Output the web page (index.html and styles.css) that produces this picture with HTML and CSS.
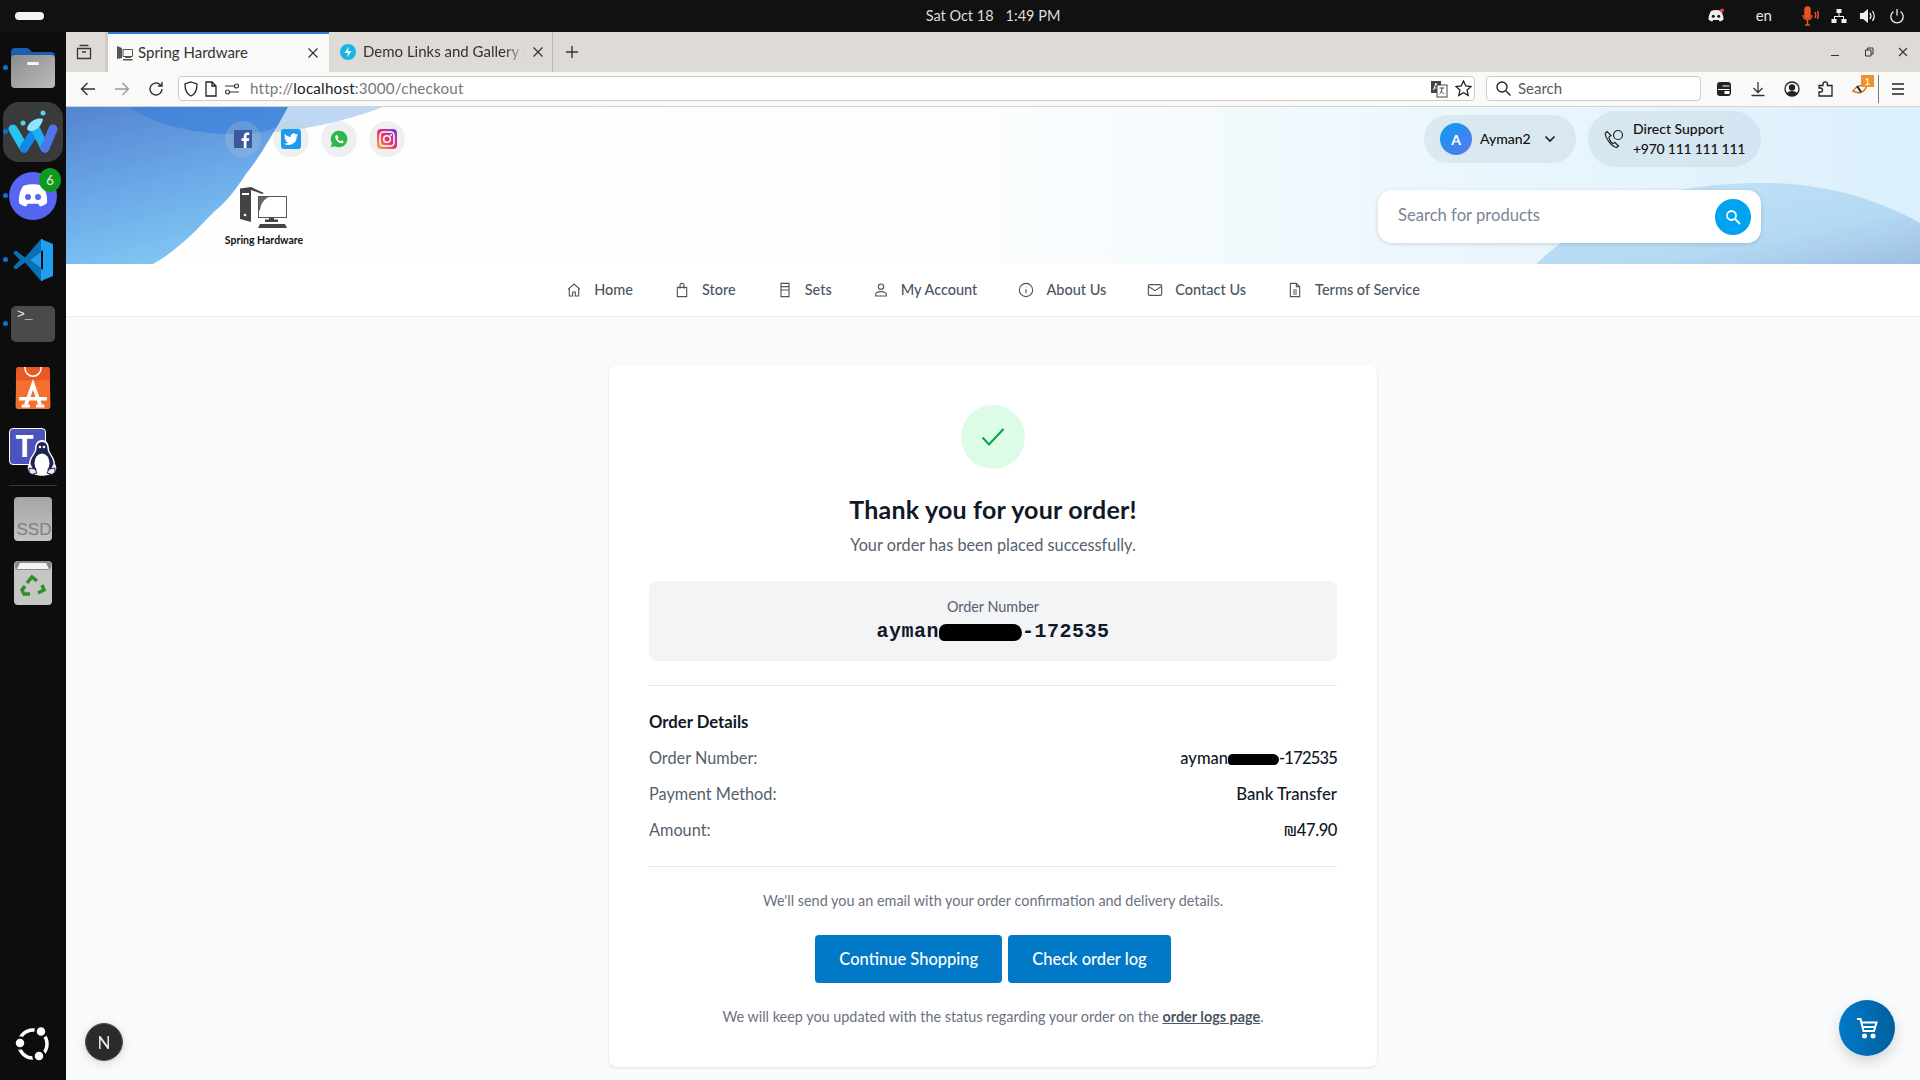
FILE: index.html
```html
<!DOCTYPE html>
<html>
<head>
	<meta charset="utf-8">
	<title>Spring Hardware</title>
	<link rel="stylesheet" href="styles.css">
</head>
<body>
	<div class="topbar">
		<div class="activities"></div>
		<div class="clock"><span>Sat Oct 18</span><span>1:49 PM</span></div>
		<div class="tray">
			<svg class="tray-discord" width="18" height="16" viewBox="0 0 18 16"><path fill="#eee" d="M4 3c3-1.300 7-1.300 10 0 1.500 2.500 2.500 5 2.500 8.500-1 1-2.500 1.700-3.800 1.900l-.9-1.500H6.200l-.9 1.500C4 13.200 2.500 12.500 1.500 11.500 1.500 8 2.500 5.500 4 3z"/><circle cx="6.300" cy="8.300" r="1.500" fill="#111"/><circle cx="11.700" cy="8.300" r="1.500" fill="#111"/><circle cx="15" cy="2.500" r="2" fill="#e5443a"/></svg>
			<span class="tray-lang">en</span>
			<svg class="tray-mic" width="18" height="20" viewBox="0 0 18 20" fill="none" stroke="#e95420" stroke-width="1.500"><rect x="4" y="1" width="5" height="11" rx="2.500" fill="#e95420"/><path d="M2 9c0 6 9 6 9 0M6.500 14v5M4 19h5M14 6c1 2 1 4 0 6M16.500 5c1 2.500 1 5.500 0 8"/></svg>
			<svg class="tray-net" width="16" height="16" viewBox="0 0 16 16" fill="#eee"><rect x="5.500" y="1" width="5" height="4"/><rect x="0.500" y="11" width="5" height="4"/><rect x="10.500" y="11" width="5" height="4"/><path d="M7.500 5h1v3h4.500v3h-1V9H4v2H3V8h4.500z"/></svg>
			<svg class="tray-vol" width="18" height="16" viewBox="0 0 18 16"><path fill="#eee" d="M1 5h3l5-4v14l-5-4H1z"/><path fill="none" stroke="#eee" stroke-width="1.300" d="M11 5c1.200 2 1.200 4 0 6M13.500 3c2 3 2 7 0 10"/></svg>
			<svg class="tray-power" width="16" height="16" viewBox="0 0 16 16" fill="none" stroke="#eee" stroke-width="1.300"><path d="M8 1v6.500M4.500 3.500a6.200 6.200 0 1 0 7 0"/></svg>
		</div>
	</div>

	<div class="desktop">
		<div class="dock">
			<div class="dock-item">
				<span class="dot"></span>
				<svg width="44" height="40" viewBox="0 0 44 40"><defs><linearGradient id="folderg" x1="0" y1="0" x2="1" y2="1"><stop offset="0" stop-color="#8c8c8c"/><stop offset="1" stop-color="#bcbcbc"/></linearGradient></defs><path fill="#1a5fb4" d="M0 4q0-4 4-4h11q2 0 3 1l3 3h19q4 0 4 4v10H0z"/><rect y="7" width="44" height="33" rx="4" fill="url(#folderg)"/><rect x="16" y="14" width="12" height="3" rx="1.500" fill="#f6f6f6"/></svg>
			</div>
			<div class="dock-item">
				<span class="dot"></span>
				<div class="dock-active">
					<svg width="60" height="60" viewBox="0 0 60 60" fill="none" stroke-width="9" stroke-linecap="round">
						<path stroke="#27c3f3" d="M10 27l11 19"/>
						<path stroke="#1287e6" d="M21 46l12-18"/>
						<path stroke="#22aef0" d="M33 28l9 18"/>
						<path stroke="#4d76ea" d="M42 46l8-19"/>
						<path fill="#8fe3fa" stroke="none" d="M24 27c1-6 8-12 16-10-1 5-4 9-8 11-3 2-7 1-8-1z"/>
						<circle cx="40" cy="11" r="2.500" fill="#55d0f5" stroke="none"/>
						<circle cx="20" cy="21" r="2.500" fill="#55d0f5" stroke="none"/>
					</svg>
				</div>
			</div>
			<div class="dock-item">
				<span class="dot"></span>
				<div class="discord">
					<svg width="32" height="26" viewBox="0 0 32 26"><path fill="#fff" d="M6 3c6-2.500 14-2.500 20 0 3 5 4.500 10 4 17-2 1.800-4.500 3-7 3.500l-1.800-2.800H10.800L9 23.500C6.500 23 4 21.800 2 20 1.500 13 3 8 6 3z"/><circle cx="11" cy="14" r="3" fill="#5865f2"/><circle cx="21" cy="14" r="3" fill="#5865f2"/></svg>
					<span class="badge">6</span>
				</div>
			</div>
			<div class="dock-item">
				<span class="dot"></span>
				<svg width="44" height="44" viewBox="0 0 44 44"><path fill="#0a6fb5" d="M2 15l3-2.500 9 7L30 1l2 0v11L19 22l13 10v11h-2L14 24.500l-9 7L2 29l7-7z"/><path fill="#1f9ff0" d="M30 1l12 5v32l-12 5zM32 12v20l-13-10z" fill-rule="evenodd"/></svg>
			</div>
			<div class="dock-item">
				<span class="dot"></span>
				<div class="terminal"><span>&gt;_</span></div>
			</div>
			<div class="dock-item">
				<svg width="36" height="42" viewBox="0 0 34 41"><path fill="#f4702f" d="M3 0h28q2 0 2.300 2L34 38q0 3-3 3H3q-3 0-3-3L.7 2Q1 0 3 0z"/><path fill="#e85a24" d="M3 0h28q2 0 2.300 2l.5 11H.2L.7 2Q1 0 3 0z"/><path fill="none" stroke="#fff" stroke-width="1.500" d="M9 0c0 12 16 12 16 0"/><path fill="none" stroke="#fff" stroke-width="3.500" d="M10 37L17 17l7 20M3.500 31h27"/><path fill="none" stroke="#fff" stroke-width="3" d="M6 38h8M20 38h8"/></svg>
			</div>
			<div class="dock-item">
				<div class="teams">
					<div class="teams-box"><span>T</span></div>
					<svg class="tux" width="30" height="36" viewBox="0 0 30 36"><path fill="#fff" d="M15 0c5 0 7 4 7 9 0 4 6 8 6 15 2 3 2 7-2 9l-5 2c-3 1-9 1-12 0l-5-2c-4-2-4-6-2-9 0-7 6-11 6-15 0-5 2-9 7-9z"/><path fill="#1c2450" d="M15 2c4 0 5.500 3 5.500 7 0 4 6 8 6 15l-3 6H6.500l-3-6c0-7 6-11 6-15 0-4 1.500-7 5.500-7z"/><ellipse cx="15" cy="23" rx="7.500" ry="9.500" fill="#fff"/><circle cx="13" cy="7" r="1.300" fill="#fff"/><circle cx="17" cy="7" r="1.300" fill="#fff"/><path fill="#e8e8f2" stroke="#1c2450" d="M2 28l6 1 2 4-5 1.500-3-2zM28 28l-6 1-2 4 5 1.500 3-2z"/></svg>
				</div>
			</div>
			<div class="dock-sep"></div>
			<div class="dock-item">
				<svg width="38" height="44" viewBox="0 0 38 44"><defs><linearGradient id="ssdg" x1="0" y1="0" x2="0" y2="1"><stop offset="0" stop-color="#a5a5a5"/><stop offset="1" stop-color="#c4c4c4"/></linearGradient></defs><rect width="38" height="44" x="0" y="0" rx="4" fill="url(#ssdg)"/><text x="20" y="38" class="ssd-label">SSD</text></svg>
			</div>
			<div class="dock-item">
				<svg width="38" height="44" viewBox="0 0 38 44"><rect width="38" height="44" rx="4" fill="#c6c7c3"/><rect x="1" y="0" width="36" height="9" rx="3" fill="#8a8a88"/><path fill="#f5f5f5" d="M6 2h26l3 6H3z"/><g fill="none" stroke="#2f8f2c" stroke-width="3.500"><path d="M13 22l5-6 5 4M28 24l2 5-6 3M16 33h-6l-2-4 3-4"/></g></svg>
			</div>
			<div class="dock-item dock-bottom">
				<svg width="38" height="38" viewBox="0 0 38 38"><circle cx="19" cy="19" r="14" fill="none" stroke="#fff" stroke-width="3.500"/><circle cx="6" cy="18" r="5.500" fill="#fff" stroke="#0d0d0d" stroke-width="2.500"/><circle cx="27" cy="6.500" r="5.500" fill="#fff" stroke="#0d0d0d" stroke-width="2.500"/><circle cx="25" cy="31" r="5.500" fill="#fff" stroke="#0d0d0d" stroke-width="2.500"/></svg>
			</div>
		</div>

		<div class="browser">
			<div class="tabstrip">
				<div class="tab-list">
					<svg width="16" height="16" viewBox="0 0 16 16" fill="none" stroke="#3a3a3a" stroke-width="1.300"><path d="M3.500 1.500h9M1.500 4.500h13v10h-13zM6 8h4"/></svg>
				</div>
				<div class="tab tab-active">
					<svg class="fav-computer" width="16" height="16" viewBox="0 0 16 16"><path fill="#555" d="M0 1l5 2v10l-5 1z"/><path fill="none" stroke="#555" d="M6 4.500h9.500v7H6z"/><path fill="#555" d="M8 12h6v1H8zM6 14h9.500v1.500H6z"/></svg>
					<span class="tab-title">Spring Hardware</span>
					<svg class="tab-close" width="12" height="12" viewBox="0 0 12 12" stroke="#333" stroke-width="1.200"><path d="M1.500 1.500l9 9M10.500 1.500l-9 9"/></svg>
				</div>
				<div class="tab">
					<svg class="fav-bolt" width="16" height="16" viewBox="0 0 16 16"><circle cx="8" cy="8" r="8" fill="#18b5e4"/><path fill="#fff" d="M9 2.500L4.500 9H8l-1 4.500L11.500 7H8z"/></svg>
					<span class="tab-title tab-fade">Demo Links and Gallery | S</span>
					<svg class="tab-close" width="12" height="12" viewBox="0 0 12 12" stroke="#333" stroke-width="1.200"><path d="M1.500 1.500l9 9M10.500 1.500l-9 9"/></svg>
				</div>
				<div class="tab-new">
					<svg width="14" height="14" viewBox="0 0 14 14" stroke="#333" stroke-width="1.400"><path d="M7 1v12M1 7h12"/></svg>
				</div>
				<div class="win-controls">
					<svg width="10" height="10" viewBox="0 0 10 10" stroke="#333"><path d="M1 8.500h8"/></svg>
					<svg width="10" height="10" viewBox="0 0 10 10" fill="none" stroke="#333"><path d="M1.500 3h5.500v6H1.500zM3.500 3V1h5.500v6H7"/></svg>
					<svg width="10" height="10" viewBox="0 0 10 10" stroke="#333" stroke-width="1.100"><path d="M1 1l8 8M9 1l-8 8"/></svg>
				</div>
			</div>

			<div class="toolbar">
				<div class="nav-btns">
					<svg width="16" height="16" viewBox="0 0 16 16" fill="none" stroke="#333" stroke-width="1.400"><path d="M15 8H1.500M7.500 2L1.500 8l6 6"/></svg>
					<svg width="16" height="16" viewBox="0 0 16 16" fill="none" stroke="#9a9a9a" stroke-width="1.400"><path d="M1 8h13.500M8.500 2l6 6-6 6"/></svg>
					<svg width="16" height="16" viewBox="0 0 16 16" fill="none" stroke="#333" stroke-width="1.400"><path d="M14 8a6 6 0 1 1-2-4.500L14 5M14 1v4h-4"/></svg>
				</div>
				<div class="urlbar">
					<svg width="14" height="16" viewBox="0 0 14 16" fill="none" stroke="#222" stroke-width="1.300"><path d="M7 1l6 2c0 6-1 10-6 12C2 13 1 9 1 3z"/></svg>
					<svg width="12" height="16" viewBox="0 0 12 16" fill="none" stroke="#222" stroke-width="1.300"><path d="M1 1h6l4 4v10H1zM7 1v4h4"/></svg>
					<svg width="16" height="14" viewBox="0 0 16 14" fill="none" stroke="#333" stroke-width="1.200"><path d="M1 4h9M6 10h9"/><circle cx="12.500" cy="4" r="2"/><circle cx="3.500" cy="10" r="2"/></svg>
					<span class="url-text">http://<b>localhost</b>:3000/checkout</span>
					<svg width="18" height="18" viewBox="0 0 18 18"><rect x="1" y="1" width="10" height="12" fill="#444"/><path d="M3.500 10l2.500-7 2.500 7M4.500 8h3" fill="none" stroke="#fff"/><rect x="7" y="5" width="10" height="12" fill="#fff" stroke="#444"/><path d="M9.500 8h5M12 8c0 3-1 5-2.500 6M11 11c1 1.500 2 2.500 3.500 3" fill="none" stroke="#444"/></svg>
					<svg width="17" height="17" viewBox="0 0 17 17" fill="none" stroke="#222" stroke-width="1.300"><path d="M8.500 1l2.300 5 5.200.6-3.900 3.500 1.100 5.300-4.700-2.700-4.700 2.700 1.100-5.300L1 6.600 6.200 6z"/></svg>
				</div>
				<div class="searchbar">
					<svg width="15" height="15" viewBox="0 0 15 15" fill="none" stroke="#222" stroke-width="1.400"><circle cx="6" cy="6" r="5"/><path d="M10 10l4.500 4.500"/></svg>
					<span>Search</span>
				</div>
				<div class="tool-icons">
					<svg width="16" height="16" viewBox="0 0 16 16"><rect x="1" y="1" width="14" height="14" rx="3" fill="#222"/><path d="M6.500 5h7M2 8.500h11.500" stroke="#fff" stroke-width="1.200"/><rect x="8.500" y="10" width="5" height="3" fill="#fff"/></svg>
					<svg width="16" height="16" viewBox="0 0 16 16" fill="none" stroke="#333" stroke-width="1.300"><path d="M8 1v10M3.500 7L8 11.500 12.500 7M1.500 14.500h13"/></svg>
					<svg width="16" height="16" viewBox="0 0 16 16" fill="none" stroke="#222" stroke-width="1.300"><circle cx="8" cy="8" r="7"/><circle cx="8" cy="6.500" r="2.500" fill="#222"/><path fill="#222" d="M3.500 13c1-3 8-3 9 0-2 2-7 2-9 0z"/></svg>
					<svg width="16" height="16" viewBox="0 0 16 16" fill="none" stroke="#222" stroke-width="1.300"><path d="M1 4.500h4V3a2.200 2.200 0 0 1 4.400 0v1.500H14V15H1v-4h1.500a2 2 0 0 0 0-4H1z"/></svg>
					<div class="ext-badge-wrap">
						<svg width="18" height="14" viewBox="0 0 18 14" fill="none"><path d="M1 9c3-5 9-7 14-5-2 5-6 9-14 5z" stroke="#c9702a" stroke-width="1.500"/><path d="M5 4l4 6" stroke="#222" stroke-width="2"/></svg>
						<span class="ext-badge">1</span>
					</div>
					<div class="tool-sep"></div>
					<svg width="16" height="16" viewBox="0 0 16 16" stroke="#222" stroke-width="1.400"><path d="M2 3h12M2 8h12M2 13h12"/></svg>
				</div>
			</div>

			<div class="page">
				<header class="site-header">
					<svg class="header-bg" viewBox="0 0 1854 157" preserveAspectRatio="none">
						<defs>
							<linearGradient id="hbase" x1="0" y1="0" x2="1" y2="0"><stop offset="0" stop-color="#ffffff"/><stop offset="0.5" stop-color="#fbfdfe"/><stop offset="1" stop-color="#dbf0fc"/></linearGradient>
							<linearGradient id="hblue" x1="0" y1="0" x2="0.35" y2="1"><stop offset="0" stop-color="#5484cf"/><stop offset="0.55" stop-color="#6aa8e8"/><stop offset="1" stop-color="#80c4f2"/></linearGradient>
							<linearGradient id="hright" x1="0" y1="0" x2="1" y2="1"><stop offset="0" stop-color="#c4e4f8"/><stop offset="0.65" stop-color="#b4d9f3"/><stop offset="1" stop-color="#9dbfe3"/></linearGradient>
						</defs>
						<rect width="1854" height="157" fill="url(#hbase)"/>
						<path fill="url(#hblue)" d="M0 0H222C205 30 195 48 180 67C168 85 160 95 150 103C140 112 132 122 123 130C112 140 100 150 87 157H0z"/>
						<path fill="#4a8ee0" opacity="0.35" d="M63 0C90 18 130 27 165 27C220 27 270 18 317 0z"/>
						<path fill="#2b78dc" opacity="0.4" d="M63 0C90 18 130 27 165 27C185 27 200 24 211 20L222 0z"/>
						<path fill="url(#hright)" d="M1470 157C1530 100 1600 76 1695 76C1760 76 1810 92 1854 116V157z"/>
					</svg>
					<div class="header-left">
						<div class="socials">
							<a class="social"><svg width="18" height="18" viewBox="0 0 18 18"><rect width="18" height="18" fill="#3b5a9a"/><path fill="#fff" d="M12.500 18v-7h2.300l.4-2.800h-2.700V6.500c0-.8.300-1.400 1.400-1.400h1.400V2.600c-.3-.1-1.100-.1-2-.1-2.100 0-3.500 1.200-3.500 3.500v2.200H7.500V11h2.300v7z"/></svg></a>
							<a class="social"><svg width="20" height="20" viewBox="0 0 24 24"><rect width="24" height="24" rx="4" fill="#1f9bee"/><path fill="#fff" d="M20.500 7c-.6.300-1.300.5-2 .5.700-.4 1.300-1.100 1.500-1.900-.7.400-1.400.7-2.200.9a3.500 3.500 0 0 0-6 3.200C8.900 9.500 6.400 8.200 4.700 6.100c-.9 1.600-.4 3.600 1.100 4.600-.6 0-1.100-.2-1.600-.4 0 1.700 1.200 3.100 2.800 3.500-.5.100-1.100.1-1.600 0 .5 1.400 1.700 2.400 3.300 2.400A7 7 0 0 1 3.500 17.600a10 10 0 0 0 15.400-8.900c.7-.4 1.200-1 1.600-1.700z"/></svg></a>
							<a class="social"><svg width="18" height="18" viewBox="0 0 24 24"><path fill="#2fb84a" d="M12 1a11 11 0 0 0-9.400 16.600L1 23l5.600-1.500A11 11 0 1 0 12 1z"/><path fill="#fff" d="M8.500 6.500c-.5 0-1.500 1-1.500 2.700 0 3 3.500 7.500 8 8.600 1.800.2 3-1 3-2.200 0-.6-.2-.7-2.500-1.800-.5 0-1 1.200-1.500 1.200-1.500-.4-3.200-2-3.800-3.500 0-.5 1-1 1-1.700 0-.4-1-3.300-2.700-3.300z"/></svg></a>
							<a class="social"><svg width="20" height="20" viewBox="0 0 20 20"><defs><linearGradient id="igrad" x1="0" y1="1" x2="1" y2="0"><stop offset="0" stop-color="#fdb24a"/><stop offset="0.5" stop-color="#ec2f6d"/><stop offset="1" stop-color="#6a3fd6"/></linearGradient></defs><rect width="20" height="20" rx="4" fill="url(#igrad)"/><rect x="3" y="3" width="14" height="14" rx="3.500" fill="none" stroke="#fff" stroke-width="1.500"/><circle cx="10" cy="10" r="3.300" fill="none" stroke="#fff" stroke-width="1.500"/><circle cx="14" cy="6" r="1" fill="#fff"/></svg></a>
						</div>
						<div class="logo">
							<svg width="48" height="41" viewBox="0 0 48 41"><path fill="#444" d="M0 1.500L11 0v35L0 32z"/><path fill="#444" d="M11 0l13 6-2 1-11-4z"/><rect x="2" y="6" width="7" height="2" fill="#fff"/><circle cx="5" cy="28" r="1.300" fill="#fff"/><rect x="18.500" y="9.500" width="28" height="21" fill="#fff" stroke="#555"/><path fill="#666" d="M19 10h10c-5 2-8 6-9 13l-1 1z"/><path fill="#444" d="M29 31h5v1.500h4V35H25v-2.500h4zM20 37h25l2 4H18z"/></svg>
							<span class="logo-name">Spring Hardware</span>
						</div>
					</div>
					<div class="header-right">
						<div class="pills">
							<div class="pill pill-user">
								<span class="avatar">A</span>
								<span class="pill-name">Ayman2</span>
								<svg width="12" height="8" viewBox="0 0 12 8" fill="none" stroke="#222" stroke-width="1.700"><path d="M1.500 1.500L6 6l4.500-4.500"/></svg>
							</div>
							<div class="pill pill-support">
								<svg width="20" height="20" viewBox="0 0 20 20" fill="none" stroke="#222" stroke-width="1.200"><path d="M3 2.500L1.500 4c-1 3 5 13 11 14.500l2-1.500-3.500-3.500-2 1C7 13.500 5 10 5 8l2-1.500z"/><circle cx="14" cy="6" r="4.500"/></svg>
								<div class="support-text"><span>Direct Support</span><span class="support-phone">+970 111 111 111</span></div>
							</div>
						</div>
						<div class="product-search">
							<span class="search-hint">Search for products</span>
							<button class="search-btn"><svg width="16" height="16" viewBox="0 0 16 16" fill="none" stroke="#fff" stroke-width="1.800"><circle cx="6.500" cy="6.500" r="4.500"/><path d="M10 10l5 5"/></svg></button>
						</div>
					</div>
				</header>

				<nav class="site-nav">
					<a class="nav-link"><svg class="nav-icon" viewBox="0 0 24 24"><path d="M3 11l9-8 9 8M5 9.500V21h5v-6h4v6h5V9.500"/></svg>Home</a>
					<a class="nav-link"><svg class="nav-icon" viewBox="0 0 24 24"><path d="M5 8h14v14H5zM9 10V5a3 3 0 0 1 6 0v5"/></svg>Store</a>
					<a class="nav-link"><svg class="nav-icon" viewBox="0 0 24 24"><path d="M6 2h12v20H6zM6 7h12M6 12h12M12 16.500v.5"/></svg>Sets</a>
					<a class="nav-link"><svg class="nav-icon" viewBox="0 0 24 24"><circle cx="12" cy="7" r="4"/><path d="M4 21v-2c0-3 4-4.500 8-4.500s8 1.500 8 4.500v2z"/></svg>My Account</a>
					<a class="nav-link"><svg class="nav-icon" viewBox="0 0 24 24"><circle cx="12" cy="12" r="10"/><path d="M12 11v6M12 7v1"/></svg>About Us</a>
					<a class="nav-link"><svg class="nav-icon" viewBox="0 0 24 24"><rect x="2" y="4" width="20" height="16" rx="2"/><path d="M3 7l9 6 9-6"/></svg>Contact Us</a>
					<a class="nav-link"><svg class="nav-icon" viewBox="0 0 24 24"><path d="M5 2h9l5 5v15H5zM14 2v5h5M9 12h6M9 15h6M9 18h6"/></svg>Terms of Service</a>
				</nav>

				<main class="content">
					<section class="card">
						<div class="check-circle">
							<svg width="24" height="24" viewBox="0 0 24 24" fill="none" stroke="#0ea54a" stroke-width="2.200"><path d="M1.500 12.500l6.500 7L22.500 4"/></svg>
						</div>
						<h1 class="thanks">Thank you for your order!</h1>
						<p class="placed">Your order has been placed successfully.</p>
						<div class="order-box">
							<span class="order-label">Order Number</span>
							<span class="order-value">ayman<span class="redact"></span>-172535</span>
						</div>
						<hr class="divider">
						<div class="details">
							<h2 class="details-title">Order Details</h2>
							<div class="detail-row"><span>Order Number:</span><b>ayman<span class="redact redact-small"></span><span class="digits">-172535</span></b></div>
							<div class="detail-row"><span>Payment Method:</span><b class="value-wide">Bank Transfer</b></div>
							<div class="detail-row"><span>Amount:</span><b class="amount">₪47.90</b></div>
						</div>
						<hr class="divider">
						<p class="note">We'll send you an email with your order confirmation and delivery details.</p>
						<div class="actions">
							<a class="btn">Continue Shopping</a>
							<a class="btn">Check order log</a>
						</div>
						<p class="note note-last">We will keep you updated with the status regarding your order on the <a class="logs-link">order logs page</a>.</p>
					</section>
				</main>
			</div>
		</div>
	</div>

	<div class="next-badge"><span>N</span></div>
	<button class="cart-fab">
		<svg width="24" height="24" viewBox="0 0 24 24" fill="none" stroke="#fff" stroke-width="2"><path d="M2 3h3.500l3 12h10.500l2.500-8.500H6.500M8 11h12"/><circle cx="9.500" cy="20" r="1.500" fill="#fff"/><circle cx="18" cy="20" r="1.500" fill="#fff"/></svg>
	</button>
</body>
</html>
```

FILE: styles.css
```css
* {
  box-sizing: border-box;
}

html, body {
  height: 100%;
  margin: 0;
  overflow: hidden;
}

body {
  display: flex;
  flex-direction: column;
  font-family: "Lato", "Noto Sans", sans-serif;
  color: #111827;
  background: #f9fafb;
}

/* top bar */
.topbar {
  height: 32px;
  flex: none;
  background: #111;
  display: grid;
  grid-template-columns: 1fr auto 1fr;
  align-items: center;
  padding: 0 15px;
  color: #ddd;
  font-size: 14.5px;
}

.activities {
  width: 29px;
  height: 8px;
  border-radius: 4px;
  background: #f2f2f2;
}

.clock {
  display: flex;
  gap: 12px;
  margin-left: 66px;
  padding-bottom: 2px;
}

.tray {
  display: flex;
  align-items: center;
  justify-content: flex-end;
  gap: 12px;
}

.tray-lang {
  margin: 0 17px 0 19px;
  color: #dcebf5;
  font-size: 15px;
  padding-bottom: 2px;
}

/* dock */
.desktop {
  flex: 1;
  display: flex;
  min-height: 0;
}

.dock {
  width: 66px;
  flex: none;
  background: #0d0d0d;
  display: flex;
  flex-direction: column;
  padding: 4px 0;
}

.dock-item {
  position: relative;
  height: 64px;
  flex: none;
  display: flex;
  align-items: center;
  justify-content: center;
}

.dock-bottom {
  margin-top: auto;
}

.dock-sep {
  height: 1px;
  margin: 1px 9px;
  background: #3a3a3a;
}

.dot {
  position: absolute;
  left: 3px;
  top: 29px;
  width: 5px;
  height: 5px;
  border-radius: 50%;
  background: #0f6fd8;
}

.dock-active {
  width: 60px;
  height: 60px;
  border-radius: 16px;
  background: #3a3a3a;
}

.discord {
  position: relative;
  width: 48px;
  height: 48px;
  border-radius: 50%;
  background: #5865f2;
  display: flex;
  align-items: center;
  justify-content: center;
}

.badge {
  position: absolute;
  top: -4px;
  right: -4px;
  width: 22px;
  height: 24px;
  border-radius: 50%;
  background: #0e9a1e;
  color: #eee;
  font-size: 13px;
  display: flex;
  align-items: center;
  justify-content: center;
}

.terminal {
  width: 44px;
  height: 36px;
  border-radius: 5px;
  background: #4a4a4a;
  color: #eee;
  font: 13px "Liberation Mono", monospace;
  padding: 1px 6px;
}

.teams {
  position: relative;
  width: 48px;
  height: 48px;
}

.teams-box {
  width: 37px;
  height: 37px;
  border-radius: 4px;
  background: #4b53bc;
  border: 1px solid #fff;
  color: #fff;
  font-size: 30px;
  font-weight: 900;
  line-height: 32px;
  text-align: center;
  padding-right: 6px;
}

.tux {
  position: absolute;
  right: 0;
  bottom: 0;
}

.ssd-label {
  font: 17px "Liberation Sans", sans-serif;
  fill: #808080;
  text-anchor: middle;
}

/* browser chrome */
.browser {
  flex: 1;
  min-width: 0;
  display: flex;
  flex-direction: column;
}

.tabstrip {
  height: 40px;
  flex: none;
  background: #dedbd6;
  display: flex;
  font-size: 15px;
  color: #333;
}

.tab-list {
  width: 42px;
  display: flex;
  align-items: center;
  justify-content: center;
  padding-right: 4px;
  border-right: 3px solid #cfccc7;
}

.tab {
  width: 221px;
  display: flex;
  align-items: center;
  padding: 0 10px 0 9px;
  gap: 5px;
  border-right: 1px solid #b9b6b1;
}

.tab + .tab {
  width: 224px;
  padding-left: 11px;
  padding-right: 8px;
  gap: 7px;
}

.tab-active {
  background: #f9f9f7;
  border-top: 2px solid #2b7fd8;
  border-right: none;
}

.tab-title {
  flex: 1;
  white-space: nowrap;
  overflow: hidden;
  padding-bottom: 2px;
}

.tab-fade {
  -webkit-mask-image: linear-gradient(to right, #000 88%, transparent);
  mask-image: linear-gradient(to right, #000 88%, transparent);
}

.tab-close {
  flex: none;
}

.tab-new {
  width: 38px;
  display: flex;
  align-items: center;
  justify-content: center;
}

.win-controls {
  margin-left: auto;
  display: flex;
  align-items: center;
  gap: 24px;
  padding-right: 12px;
}

.toolbar {
  height: 35px;
  flex: none;
  background: #f9f9f7;
  border-bottom: 1px solid #d4d2ce;
  display: flex;
  align-items: center;
  padding-left: 14px;
  padding-bottom: 1px;
  font-size: 15px;
  color: #5a5a5a;
}

.nav-btns {
  display: flex;
  gap: 18px;
  width: 98px;
  flex: none;
}

.urlbar {
  width: 1297px;
  height: 25px;
  flex: none;
  background: #fff;
  border: 1px solid #cfcdc8;
  border-radius: 4px;
  display: flex;
  align-items: center;
  gap: 7px;
  padding: 0 2px 0 5px;
}

.url-text {
  flex: 1;
  margin-left: 3px;
  padding-bottom: 2px;
  color: #777;
  font-size: 15.2px;
  letter-spacing: 0.2px;
}

.url-text b {
  font-weight: 400;
  color: #222;
}

.searchbar {
  width: 215px;
  height: 25px;
  flex: none;
  margin-left: 11px;
  padding-bottom: 1px;
  background: #fff;
  border: 1px solid #cfcdc8;
  border-radius: 4px;
  display: flex;
  align-items: center;
  gap: 7px;
  padding-left: 9px;
}

.tool-icons {
  flex: 1;
  display: flex;
  align-items: center;
  gap: 18px;
  padding-left: 15px;
}

.ext-badge-wrap {
  position: relative;
  width: 16px;
  height: 16px;
}

.ext-badge {
  position: absolute;
  top: -6px;
  right: -6px;
  width: 13px;
  height: 12px;
  background: #f0922b;
  color: #fff;
  font-size: 10px;
  line-height: 12px;
  text-align: center;
}

.tool-sep {
  width: 1px;
  height: 28px;
  flex: none;
  margin: 0 -7px 0 -8px;
  background: #777;
}

/* site header */
.page {
  flex: 1;
  min-height: 0;
  overflow: hidden;
  display: flex;
  flex-direction: column;
  background: #f9fafb;
}

.site-header {
  position: relative;
  height: 157px;
  flex: none;
  display: flex;
  justify-content: space-between;
  padding: 4px 159px 0;
}

.header-bg {
  position: absolute;
  inset: 0;
  width: 100%;
  height: 100%;
}

.header-left,
.header-right {
  position: relative;
}

.socials {
  display: flex;
  gap: 12px;
  margin-top: 10px;
}

.social {
  width: 36px;
  height: 36px;
  border-radius: 50%;
  background: rgba(190, 195, 200, 0.25);
  display: flex;
  align-items: center;
  justify-content: center;
}

.logo {
  width: 78px;
  margin-top: 30px;
  display: flex;
  flex-direction: column;
  align-items: center;
  gap: 6px;
}

.logo-name {
  font-size: 10.5px;
  font-weight: 700;
  white-space: nowrap;
  color: #111;
}

.header-right {
  width: 383px;
  display: flex;
  flex-direction: column;
  align-items: flex-end;
}

.pills {
  display: flex;
  align-items: center;
  gap: 12px;
  font-size: 14px;
  font-weight: 500;
  color: #111;
}

.pill {
  display: flex;
  align-items: center;
  background: rgba(170, 190, 205, 0.25);
}

.pill-user {
  width: 152px;
  height: 48px;
  border-radius: 24px;
  padding-left: 16px;
  gap: 8px;
}

.avatar {
  width: 32px;
  height: 32px;
  border-radius: 50%;
  background: linear-gradient(135deg, #0a9cf0, #5a78f0);
  color: #fff;
  display: flex;
  align-items: center;
  justify-content: center;
  font-weight: 700;
}

.pill-name {
  width: 56px;
  padding-bottom: 1px;
}

.pill-support {
  width: 173px;
  height: 56px;
  border-radius: 28px;
  padding-left: 16px;
  gap: 9px;
}

.support-text {
  display: flex;
  flex-direction: column;
  line-height: 20px;
  white-space: nowrap;
}

.support-phone {
  letter-spacing: -0.25px;
}

.product-search {
  width: 383px;
  height: 53px;
  margin-top: 23px;
  background: #fff;
  border-radius: 14px;
  box-shadow: 0 1px 4px rgba(0, 0, 0, 0.15);
  display: flex;
  align-items: center;
  justify-content: space-between;
  padding: 0 10px 0 20px;
  font-size: 16.6px;
  color: #7a8594;
}

.search-hint {
  padding-bottom: 4px;
}

.search-btn {
  width: 36px;
  height: 36px;
  border: none;
  border-radius: 50%;
  padding: 0;
  background: #00a3f0;
  display: flex;
  align-items: center;
  justify-content: center;
}

/* site nav */
.site-nav {
  height: 53px;
  flex: none;
  background: #fff;
  border-bottom: 1px solid #eceef1;
  display: flex;
  align-items: center;
  justify-content: center;
  gap: 41px;
  font-size: 14.5px;
  font-weight: 500;
  color: #4b5563;
  padding-bottom: 1px;
}

.nav-link {
  display: flex;
  align-items: center;
  gap: 12px;
  white-space: nowrap;
}

.nav-icon {
  width: 16px;
  height: 16px;
  fill: none;
  stroke: #4b5563;
  stroke-width: 1.700;
}

/* order card */
.content {
  padding-top: 48px;
  display: flex;
  justify-content: center;
}

.card {
  width: 768px;
  flex: none;
  padding: 40px;
  background: #fff;
  border-radius: 8px;
  box-shadow: 0 1px 3px rgba(0, 0, 0, 0.1);
  display: flex;
  flex-direction: column;
  align-items: center;
}

.check-circle {
  width: 64px;
  height: 64px;
  border-radius: 50%;
  background: #dcfce7;
  display: flex;
  align-items: center;
  justify-content: center;
}

.thanks {
  margin: 24px 0 0;
  font-size: 25px;
  line-height: 32px;
  font-weight: 700;
  letter-spacing: 0.2px;
}

.placed {
  margin: 8px 0 0;
  font-size: 16.3px;
  line-height: 24px;
  color: #565f6d;
}

.order-box {
  width: 100%;
  margin-top: 24px;
  padding: 16px;
  background: #f3f4f6;
  border-radius: 8px;
  display: flex;
  flex-direction: column;
  align-items: center;
}

.order-label {
  font-size: 14.4px;
  line-height: 20px;
  color: #565f6d;
}

.order-value {
  font-family: "Liberation Mono", monospace;
  font-size: 20px;
  line-height: 28px;
  font-weight: 700;
  letter-spacing: 0.5px;
  display: flex;
  align-items: center;
  margin: 1px 0 -1px;
}

.redact {
  width: 83px;
  height: 17px;
  background: #000;
  border-radius: 8px 10px 9px 6px;
}

.redact-small {
  display: inline-block;
  width: 51px;
  height: 11px;
  vertical-align: -1px;
}

.divider {
  width: 100%;
  margin: 24px 0 0;
  border: none;
  border-top: 1px solid #e5e7eb;
}

.details {
  width: 100%;
  margin-top: 24px;
  display: flex;
  flex-direction: column;
  gap: 12px;
  font-size: 16.3px;
  line-height: 24px;
}

.details-title {
  margin: 0;
  font-size: 16.7px;
  font-weight: 700;
}

.detail-row {
  display: flex;
  justify-content: space-between;
  color: #565f6d;
}

.detail-row b {
  font-size: 16.5px;
  font-weight: 500;
  color: #111827;
}

.detail-row .value-wide {
  font-size: 16.8px;
}

.digits {
  letter-spacing: -0.8px;
}

.amount {
  letter-spacing: -0.4px;
}

.note {
  margin: 24px 0 0;
  font-size: 14.4px;
  line-height: 20px;
  color: #6b7280;
}

.actions {
  margin-top: 24px;
  display: flex;
  gap: 6px;
}

.btn {
  height: 48px;
  padding: 0 24px 1px;
  background: #0279c7;
  border-radius: 4px;
  color: #fff;
  font-size: 16.5px;
  font-weight: 500;
  display: flex;
  align-items: center;
}

.logs-link {
  font-weight: 700;
  color: #4b5563;
  text-decoration: underline;
}

/* floating */
.next-badge {
  position: fixed;
  left: 85px;
  top: 1023px;
  width: 38px;
  height: 38px;
  border-radius: 50%;
  background: #2b2b2b;
  border: 1px solid #555;
  box-shadow: 0 2px 10px rgba(0, 0, 0, 0.15);
  color: #eee;
  font-size: 17px;
  display: flex;
  align-items: center;
  justify-content: center;
}

.cart-fab {
  position: fixed;
  left: 1839px;
  top: 1000px;
  width: 56px;
  height: 56px;
  border: none;
  border-radius: 50%;
  padding: 0;
  background: linear-gradient(90deg, #0279c7, #01609f);
  box-shadow: 0 6px 14px rgba(0, 0, 0, 0.15);
  display: flex;
  align-items: center;
  justify-content: center;
}
```
